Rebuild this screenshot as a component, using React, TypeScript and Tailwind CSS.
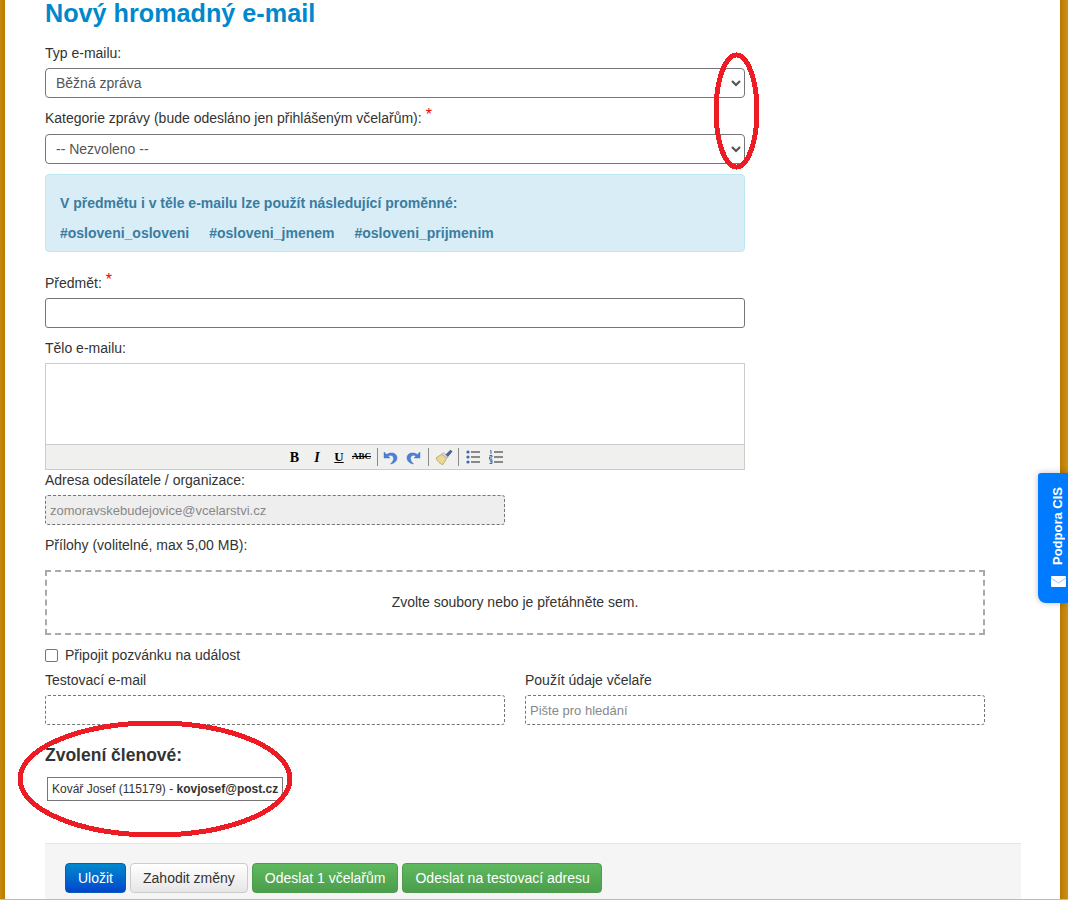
import React from "react";

const Label = ({ children, className = "" }: { children: React.ReactNode; className?: string }) => (
  <div className={`h-5 text-[14px] leading-5 text-[#333] ${className}`}>{children}</div>
);

const Star = () => <span className="relative top-[-3px] ml-1 text-[#e00] text-[16px] leading-none">*</span>;

const Chevron = () => (
  <svg width="10" height="7" viewBox="0 0 10 7" className="absolute right-[3px] top-[11px]">
    <path d="M1 1 L5 5 L9 1" fill="none" stroke="#555" strokeWidth="2.2" />
  </svg>
);

const SelectBox = ({ text }: { text: string }) => (
  <div className="relative h-[30px] w-[700px] rounded-[4px] border border-[#767676] bg-white pl-[10px] text-[14px] leading-[28px] text-[#555]">
    {text}
    <Chevron />
  </div>
);

const Undo = ({ flip = false }: { flip?: boolean }) => (
  <svg width="15" height="15" viewBox="0 0 15 15" className={flip ? "-scale-x-100" : ""}>
    <path d="M1 2 V8 H7 L5 6 C7.5 4.6 10.5 5.5 10.5 8.5 C10.5 10.5 9.5 12 7.5 14 C11.5 13.5 14 11 14 7.8 C14 3.5 9 1.2 3.6 4.4 Z" fill="#4a80d8" stroke="#3a68b8" strokeWidth="0.4" />
  </svg>
);

const Sep = ({ className = "" }: { className?: string }) => <span className={`h-[18px] w-px shrink-0 bg-[#8a8a8a] ${className}`} />;

const Cell = ({ w, children }: { w: string; children: React.ReactNode }) => (
  <span className={`flex shrink-0 items-center justify-center ${w}`}>{children}</span>
);

const Toolbar = () => (
  <div className="flex h-[26px] items-center border-y border-[#ccc] bg-[#f0f0ee] pl-[237px]">
    <Cell w="w-[23px]"><span className="font-['Liberation_Serif'] text-[14px] font-bold text-black">B</span></Cell>
    <Cell w="w-[22px]"><span className="font-['Liberation_Serif'] text-[14px] font-bold italic text-black">I</span></Cell>
    <Cell w="w-[22px]"><span className="font-['Liberation_Serif'] text-[13px] font-bold text-black underline">U</span></Cell>
    <Cell w="w-[23px]"><span className="font-['Liberation_Serif'] text-[9px] font-bold text-black line-through">ABC</span></Cell>
    <Sep className="ml-[4px]" />
    <Cell w="w-[24px]"><Undo /></Cell>
    <Cell w="w-[22px]"><Undo flip /></Cell>
    <Sep className="ml-[4px]" />
    <Cell w="w-[29px]">
      <svg width="18" height="16" viewBox="0 0 18 16">
        <path d="M1 9 L7 5 L11.5 9.5 L8 15.5 C5.5 15.5 2.5 12.5 1 9 Z" fill="#ecd98f" stroke="#a89858" strokeWidth="0.7" />
        <path d="M10 6 L15.5 0.8 L17.5 2.6 L12.5 8.5 Z" fill="#4e6690" />
        <path d="M6.5 5 L11.5 9.5 L13 8 L8.5 3.5 Z" fill="#d4d4d4" stroke="#888" strokeWidth="0.4" />
      </svg>
    </Cell>
    <Sep />
    <Cell w="w-[28px]">
      <svg width="14" height="14" viewBox="0 0 14 14">
        <g fill="#3f66b0"><circle cx="2" cy="2" r="1.6" /><circle cx="2" cy="7" r="1.6" /><circle cx="2" cy="12" r="1.6" /></g>
        <g fill="#222"><rect x="5" y="1.5" width="9" height="1" /><rect x="5" y="6.5" width="9" height="1" /><rect x="5" y="11.5" width="9" height="1" /></g>
      </svg>
    </Cell>
    <Cell w="w-[18px]">
      <svg width="14" height="14" viewBox="0 0 14 14">
        <g stroke="#3f66b0" strokeWidth="1" fill="none">
          <path d="M1 1 L2 0.5 V4" />
          <path d="M0.5 5.5 H3 V7 H0.5 V9 H3.2" />
          <path d="M0.5 10 H3 V13.5 H0.5 M1 11.7 H3" />
        </g>
        <g fill="#222"><rect x="5" y="1.5" width="9" height="1" /><rect x="5" y="6.5" width="9" height="1" /><rect x="5" y="11.5" width="9" height="1" /></g>
      </svg>
    </Cell>
  </div>
);

const Btn = ({ children, className }: { children: React.ReactNode; className: string }) => (
  <div className={`flex h-[30px] items-center rounded-[4px] border px-[12px] text-[14px] ${className}`}>{children}</div>
);

export default function App() {
  return (
    <div className="relative h-[900px] w-[1068px] overflow-hidden bg-white font-['Liberation_Sans',Arial,sans-serif]">
      <div className="flex h-[899px] w-full">
        <div className="w-[5px] shrink-0 bg-gradient-to-r from-[#c98a10] to-[#b87a00]" />
        <main className="h-[899px] w-[1055px] shrink-0 overflow-hidden pl-[40px]">
          <h1 className="h-[43px] text-[25.2px] font-bold leading-[26px] text-[#0088cc]">Nový hromadný e-mail</h1>
          <Label>Typ e-mailu:</Label>
          <div className="mt-[5px]"><SelectBox text="Běžná zpráva" /></div>
          <Label className="mt-[10px]">Kategorie zprávy (bude odesláno jen přihlášeným včelařům):<Star /></Label>
          <div className="mt-[6px]"><SelectBox text="-- Nezvoleno --" /></div>

          <div className="mt-[10px] h-[78px] w-[700px] rounded-[4px] border border-[#bce8f1] bg-[#d9edf7] px-[14px] pt-[18px] text-[14px] font-bold text-[#3a7ca0]">
            <div className="leading-5">V předmětu i v těle e-mailu lze použít následující proměnné:</div>
            <div className="mt-[10px] flex gap-[20px] leading-5">
              <span>#osloveni_osloveni</span>
              <span>#osloveni_jmenem</span>
              <span>#osloveni_prijmenim</span>
            </div>
          </div>

          <Label className="mt-[21px]">Předmět:<Star /></Label>
          <div className="mt-[5px] h-[30px] w-[700px] rounded-[3px] border border-[#767676] bg-white" />
          <Label className="mt-[10px]">Tělo e-mailu:</Label>
          <div className="mt-[5px] h-[107px] w-[700px] border-x border-t border-[#ccc] bg-white">
            <div className="h-[80px]" />
            <Toolbar />
          </div>
          <Label>Adresa odesílatele / organizace:</Label>
          <div className="mt-[5px] h-[30px] w-[460px] rounded-[3px] border border-dashed border-[#767676] bg-[#eee] pl-[4px] text-[13px] leading-[30px] text-[#888]">zomoravskebudejovice@vcelarstvi.cz</div>
          <Label className="mt-[10px]">Přílohy (volitelné, max 5,00 MB):</Label>
          <div className="mt-[15px] flex h-[65px] w-[940px] items-center justify-center border-2 border-dashed border-[#aaa] text-[14px] text-[#333]">Zvolte soubory nebo je přetáhněte sem.</div>
          <label className="mt-[10px] flex h-5 items-center text-[14px] text-[#333]">
            <span className="h-[13px] w-[13px] rounded-[2px] border border-[#767676] bg-white" />
            <span className="ml-[7px]">Připojit pozvánku na událost</span>
          </label>
          <div className="mt-[5px] flex w-[940px] gap-[20px]">
            <div className="w-[460px]">
              <Label>Testovací e-mail</Label>
              <div className="mt-[5px] h-[30px] rounded-[3px] border border-dashed border-[#767676] bg-white" />
            </div>
            <div className="w-[460px]">
              <Label>Použít údaje včelaře</Label>
              <div className="mt-[5px] h-[30px] rounded-[3px] border border-dashed border-[#767676] bg-white pl-[4px] text-[13px] leading-[30px] text-[#888]">Pište pro hledání</div>
            </div>
          </div>
          <h3 className="mt-[19px] h-[22px] text-[17.5px] font-bold leading-[22px] text-[#333]">Zvolení členové:</h3>
          <div className="ml-[2px] mt-[11px] flex h-[24px] w-[236px] items-center whitespace-nowrap border border-[#767676] bg-white pl-[4px] text-[12px] text-[#333]">
            Kovář Josef (115179) -&nbsp;<b>kovjosef@post.cz</b>
          </div>
          <div className="mt-[42px] flex h-[60px] w-[976px] gap-[4px] border-t border-[#e5e5e5] bg-[#f5f5f5] pl-[20px] pt-[19px]">
            <Btn className="border-[#0a58b8] bg-gradient-to-b from-[#0088cc] to-[#0044cc] text-white">Uložit</Btn>
            <Btn className="border-[#ccc] bg-gradient-to-b from-white to-[#e6e6e6] text-[#333]">Zahodit změny</Btn>
            <Btn className="border-[#4c9c4c] bg-gradient-to-b from-[#5fb95f] to-[#4c9e4c] text-white">Odeslat 1 včelařům</Btn>
            <Btn className="border-[#4c9c4c] bg-gradient-to-b from-[#5fb95f] to-[#4c9e4c] pr-[11px] text-white">Odeslat na testovací adresu</Btn>
          </div>
        </main>
        <div className="w-[8px] shrink-0 bg-gradient-to-r from-[#b87a00] to-[#d09018]" />
      </div>
      <div className="h-px w-full bg-[#bbb]" />

      {/* floating support tab */}
      <div className="absolute left-[1038px] top-[473px] flex h-[130px] w-[30px] flex-col items-center gap-[11px] rounded-tl-[3px] rounded-bl-[8px] bg-[#007bff] pl-[10px] pt-[14px] shadow-[0_0_6px_rgba(0,0,0,0.25)]">
        <span className="rotate-180 whitespace-nowrap text-[13px] font-bold leading-4 text-white [writing-mode:vertical-rl]">Podpora CIS</span>
        <svg width="15" height="11" viewBox="0 0 15 11" className="shrink-0">
          <rect width="15" height="11" rx="1" fill="#fff" />
          <path d="M0 2 L7.5 7 L15 2" fill="none" stroke="#7db8ff" strokeWidth="0.8" />
        </svg>
      </div>

      {/* red hand-drawn annotations */}
      <svg className="pointer-events-none absolute left-0 top-0" width="1068" height="900" fill="none" shapeRendering="crispEdges">
        <ellipse cx="736.5" cy="111" rx="20.5" ry="56" stroke="#ed1c24" strokeWidth="5" />
        <ellipse cx="155" cy="779" rx="135" ry="56" stroke="#ed1c24" strokeWidth="5" />
      </svg>
    </div>
  );
}
